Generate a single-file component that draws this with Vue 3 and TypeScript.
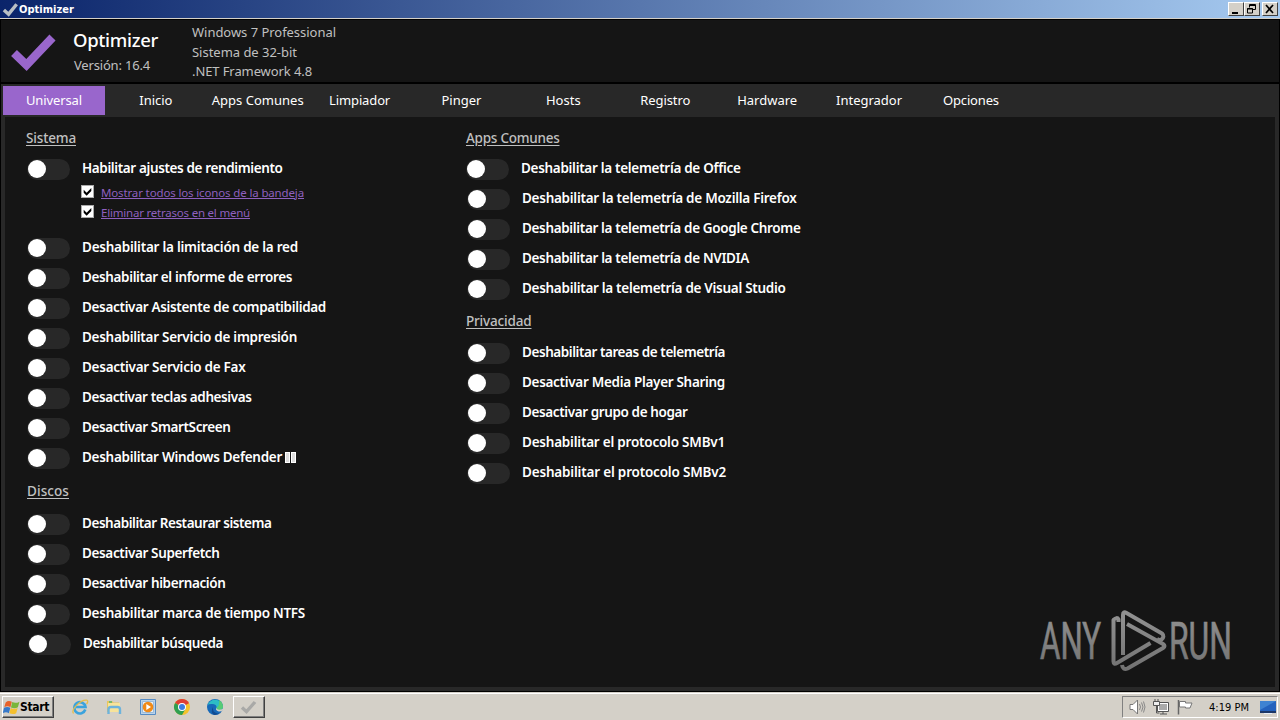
<script setup lang="ts">
import type { Directive } from 'vue'

interface Item { label: string; w: number; shift?: number; subs?: { label: string; w: number }[]; boxes?: boolean }
interface Group { title: string; w: number; kind: string; items: Item[] }

// Spreads the letters of a label so that it fills the given width.
const vFit: Directive<HTMLElement, number> = {
  mounted(el, { value }) {
    el.style.letterSpacing = '0px'
    const n = (el.textContent ?? '').length
    const w = el.getBoundingClientRect().width
    el.style.letterSpacing = `${(value - w) / n}px`
  },
}

const tabs = [
  { t: 'Universal', w: 56 }, { t: 'Inicio', w: 33 }, { t: 'Apps Comunes', w: 92 },
  { t: 'Limpiador', w: 61 }, { t: 'Pinger', w: 40 }, { t: 'Hosts', w: 35 },
  { t: 'Registro', w: 50 }, { t: 'Hardware', w: 60 }, { t: 'Integrador', w: 66 }, { t: 'Opciones', w: 56 },
]

const left: Group[] = [
  {
    title: 'Sistema', w: 50, kind: 'first', items: [
      {
        label: 'Habilitar ajustes de rendimiento', w: 200.5,
        subs: [{ label: 'Mostrar todos los iconos de la bandeja', w: 203 }, { label: 'Eliminar retrasos en el menú', w: 149 }],
      },
      { label: 'Deshabilitar la limitación de la red', w: 216 },
      { label: 'Deshabilitar el informe de errores', w: 210 },
      { label: 'Desactivar Asistente de compatibilidad', w: 244 },
      { label: 'Deshabilitar Servicio de impresión', w: 215 },
      { label: 'Desactivar Servicio de Fax', w: 163.5 },
      { label: 'Desactivar teclas adhesivas', w: 169.5 },
      { label: 'Desactivar SmartScreen', w: 148.5 },
      { label: 'Deshabilitar Windows Defender', w: 200, boxes: true },
    ],
  },
  {
    title: 'Discos', w: 42, kind: 'disks', items: [
      { label: 'Deshabilitar Restaurar sistema', w: 189.5 },
      { label: 'Desactivar Superfetch', w: 137.5 },
      { label: 'Desactivar hibernación', w: 143.5 },
      { label: 'Deshabilitar marca de tiempo NTFS', w: 223 },
      { label: 'Deshabilitar búsqueda', w: 140, shift: 1 },
    ],
  },
]

const right: Group[] = [
  {
    title: 'Apps Comunes', w: 93.5, kind: 'first', items: [
      { label: 'Deshabilitar la telemetría de Office', w: 219.5, shift: -1 },
      { label: 'Deshabilitar la telemetría de Mozilla Firefox', w: 274.5 },
      { label: 'Deshabilitar la telemetría de Google Chrome', w: 278.5 },
      { label: 'Deshabilitar la telemetría de NVIDIA', w: 227 },
      { label: 'Deshabilitar la telemetría de Visual Studio', w: 263.5 },
    ],
  },
  {
    title: 'Privacidad', w: 65.5, kind: 'privacy', items: [
      { label: 'Deshabilitar tareas de telemetría', w: 203 },
      { label: 'Desactivar Media Player Sharing', w: 203 },
      { label: 'Desactivar grupo de hogar', w: 165.5 },
      { label: 'Deshabilitar el protocolo SMBv1', w: 203 },
      { label: 'Deshabilitar el protocolo SMBv2', w: 204 },
    ],
  },
]
const columns = [left, right]
</script>

<template>
  <div class="screen">
    <div class="titlebar">
      <svg class="tick-small" viewBox="0 0 18 16"><path d="M2 9l5 4.500L15.500 3" fill="none" stroke="#b9c0c4" stroke-width="3.600" /></svg>
      <span class="wtitle"><span v-fit="55">Optimizer</span></span>
      <div class="wbtns">
        <i class="wbtn"><svg viewBox="0 0 16 14"><path d="M4 10h6v2H4z" /></svg></i>
        <i class="wbtn"><svg viewBox="0 0 16 14"><path d="M5.500 5.500V2.500h6v5h-3M5 3.500h7" class="ln" /><path d="M3.500 6.500h5v4.500h-5zM3 7h6" class="ln" /></svg></i>
        <i class="wbtn last"><svg viewBox="0 0 16 14"><path d="M4 3l7 8M11 3l-7 8" class="ln x" /></svg></i>
      </div>
    </div>

    <div class="window">
      <header class="head">
        <svg class="tick" viewBox="0 0 46 38"><path d="M4 20L16.500 32 42.500 4.500" fill="none" stroke="#9966cc" stroke-width="8.400" /></svg>
        <div class="brand">
          <div class="name"><span v-fit="85">Optimizer</span></div>
          <div class="ver"><span v-fit="76">Versión: 16.4</span></div>
        </div>
        <div class="info">
          <div><span v-fit="144">Windows 7 Professional</span></div>
          <div><span v-fit="105">Sistema de 32-bit</span></div>
          <div><span v-fit="120">.NET Framework 4.8</span></div>
        </div>
      </header>
      <nav class="tabs">
        <div v-for="(tab, i) in tabs" :key="tab.t" class="tab" :class="{ on: i === 0 }"><span v-fit="tab.w">{{ tab.t }}</span></div>
      </nav>
      <main class="body">
        <section v-for="(col, c) in columns" :key="c" class="col" :class="'col' + c">
          <div v-for="g in col" :key="g.title">
            <h2 :class="g.kind"><span v-fit="g.w">{{ g.title }}</span></h2>
            <template v-for="it in g.items" :key="it.label">
              <div class="row" :class="{ plus: it.shift === 1, minus: it.shift === -1 }">
                <div class="switch"><i /></div>
                <span v-fit="it.w" class="label">{{ it.label }}</span>
                <span v-if="it.boxes" class="boxes"><i /><i /></span>
              </div>
              <div v-if="it.subs" class="subs">
                <div v-for="s in it.subs" :key="s.label" class="sub">
                  <svg class="check" viewBox="0 0 13 13"><path d="M2 4.500v3.500l3.500 3.500L11 6V2.500L5.500 8z" /></svg>
                  <span v-fit="s.w">{{ s.label }}</span>
                </div>
              </div>
            </template>
          </div>
        </section>
        <svg class="mark" viewBox="0 0 200 70">
          <defs>
            <linearGradient id="mk" gradientUnits="userSpaceOnUse" x1="0" y1="5" x2="0" y2="66">
              <stop offset="0" stop-color="#929292" /><stop offset="1" stop-color="#707070" />
            </linearGradient>
          </defs>
          <g fill="url(#mk)" stroke="url(#mk)" stroke-width="0.700" class="mark-text">
            <text x="2" y="52" textLength="61" lengthAdjust="spacingAndGlyphs">ANY</text>
            <text x="131" y="52" textLength="63" lengthAdjust="spacingAndGlyphs">RUN</text>
          </g>
          <g fill="none" stroke="url(#mk)" stroke-width="4" stroke-linejoin="round">
            <path d="M80.500 15V12.500Q79 9.500 75.500 13V54.500Q75.500 58 79 56L112.500 36" />
            <path d="M85 48V8Q85 4 88.500 6L124 26.500Q127 29.500 123.500 32.500 121.500 33.500 119 32" />
            <path d="M89 17L125 37Q128 39 125 41L89.500 61.500Q85 63.500 84 58" />
          </g>
        </svg>
      </main>
    </div>

    <footer class="taskbar">
      <div class="start">
        <svg viewBox="0 0 16 16" class="flag">
          <path d="M2.500 3.200Q5 .8 8.300 2.600L7 7.800Q4.500 6 1.200 7.700z" fill="#e8622a" />
          <path d="M8.700 2.900Q12 4.500 15.500 2.500L14 7.800Q11 9.400 7.500 7.900z" fill="#79b63a" />
          <path d="M1 8.200Q4 6.700 6.900 8.200L5.500 13.300Q3 11.700 -.3 13.300z" fill="#3779c9" />
          <path d="M7.300 8.400Q10.500 10 13.800 8.400L12.400 13.400Q9.500 15 6 13.500z" fill="#f5c02e" />
        </svg>
        <span v-fit="29">Start</span>
      </div>
      <div class="quick">
        <svg viewBox="0 0 18 18">
          <path d="M14.300 11.500A5.600 5.600 0 1 1 14.500 9H5" fill="none" stroke="#3ba3dd" stroke-width="2.600" />
          <path d="M2.500 15.500C-1 12 10 1 16 2.200 17.500 3 16.500 5 15.500 6" fill="none" stroke="#e5bd4a" stroke-width="1.300" />
        </svg>
        <svg viewBox="0 0 18 18">
          <path d="M2 3h5l1.500 1.500H14V14H2z" fill="#e9c65d" /><path d="M3 5h12v9H3z" fill="#f7e39a" />
          <path d="M4 3h3v2H4z" fill="#79b86b" />
          <path d="M3.500 16v-4.500Q3.500 9 6 9h6.500Q15 9 15 11.500V16" fill="none" stroke="#6db3dc" stroke-width="2.400" />
        </svg>
        <svg viewBox="0 0 18 18">
          <path d="M1.500 1.500h15v15h-15z" fill="#b9d3ea" stroke="#558bc4" /><path d="M3.500 3.500h11v11h-11z" fill="#e6eef5" stroke="#9bbad8" />
          <circle cx="9" cy="9" r="5.300" fill="#f08a18" /><path d="M7.300 6v6l4.700-3z" fill="#fff" />
        </svg>
        <svg viewBox="0 0 18 18" class="chrome">
          <circle cx="9" cy="9" r="8" fill="#f4c22b" />
          <path d="M9 9L2.070 5A8 8 0 0 1 15.930 5z" fill="#df3e33" /><path d="M9 9L2.070 5A8 8 0 0 0 9 17L12.500 11z" fill="#2f9f51" />
          <path d="M9 5h6.900L9 9z" fill="#df3e33" />
          <circle cx="9" cy="9" r="4" fill="#fff" /><circle cx="9" cy="9" r="3" fill="#3d7de0" />
        </svg>
        <svg viewBox="0 0 18 18" class="edge">
          <circle cx="9" cy="9" r="8" fill="#1769b8" />
          <path d="M1.500 7A8 8 0 0 1 17 9Q16.500 12 13 12 10 12 10.500 10 11 6.500 7 6 3 5.500 1.500 7z" fill="#2dbdc5" />
          <path d="M13 2A8 8 0 0 1 17 9Q16.500 12 13 12 10 12 10.500 10 14 7 13 2z" fill="#57cb75" />
          <path d="M10.500 9.500Q9 12 12 13.300 14.500 14 16.500 12.500L18 9.800Q16 12 13.200 11.800 10.200 11.600 10.500 9.500z" fill="#d4d0c8" />
          <path d="M7 9Q6 14 11.500 15.500 14 16 15.500 14 12 17.500 8 17 4 14 7 9z" fill="#124b91" />
        </svg>
      </div>
      <div class="task"><svg viewBox="0 0 18 16"><path d="M2 8.500l4.500 4.200L15 3" fill="none" stroke="#a9a9a7" stroke-width="3.300" /></svg></div>
      <div class="tray">
        <svg viewBox="0 0 18 18" class="tv">
          <path d="M2 6.500h3L9.500 2v14L5 11.500H2z" fill="#fff" stroke="#777" />
          <path d="M11.500 6q2 3 0 6M13.500 4.500q3 4.500 0 9M15.500 3.500q3 5.500 0 11" fill="none" stroke="#888" />
        </svg>
        <svg viewBox="0 0 18 18" class="tn">
          <path d="M5.500 4.500h11v9h-11z" fill="#fff" stroke="#555" /><path d="M7 6h8v6H7z" fill="#aaa" />
          <path d="M8 16h7M11 13v3" stroke="#555" fill="none" />
          <path d="M1.500 3.500h6v4h-6z" fill="#eee" stroke="#555" /><path d="M3 1v3M6 1v3M4.500 7v8h3" stroke="#555" fill="none" />
        </svg>
        <svg viewBox="0 0 18 18" class="tf">
          <path d="M2.500 2v14.500" stroke="#666" stroke-width="1.500" /><path d="M3.500 3.500h6v1.500h6.500l-2 5H9.500V9h-6z" fill="#fff" stroke="#777" />
        </svg>
        <span class="clock"><span v-fit="40">4:19 PM</span></span>
        <svg viewBox="0 0 16 15" class="td">
          <path d="M0 1h16v10H0z" fill="#2462bd" /><path d="M0 1h16L0 10z" fill="#3f83d2" />
          <path d="M0 11h16v2H0z" fill="#1c3768" /><path d="M4 13h8v1H4z" fill="#e7eef7" />
        </svg>
      </div>
    </footer>
  </div>
</template>

<style>
body { margin: 0; background: #000; }
</style>

<style scoped>
* { box-sizing: border-box; }
.screen { width: 1280px; height: 720px; overflow: hidden; display: flex; flex-direction: column; background: #000; font-family: "Noto Sans", "Open Sans", sans-serif; white-space: nowrap; }
.screen svg { display: block; flex: none; }
.titlebar { height: 19px; flex: none; display: flex; align-items: center; border-bottom: 1px solid #d4d0c8; background: linear-gradient(90deg, #0a246a, #a6caf0); padding: 0 2px; }
.tick-small { width: 17px; height: 16px; }
.wtitle { font: bold 11px/16px "DejaVu Sans Condensed", "DejaVu Sans", sans-serif; color: #fff; flex: 1; padding-top: 1px; }
.wbtns { display: flex; }
.wbtn { width: 16px; height: 14px; background: #d4d0c8; border: 1px solid; border-color: #fff #404040 #404040 #fff; }
.wbtn svg { width: 16px; height: 14px; margin: -1px; }
.wbtn.last { margin-left: 2px; }
.ln { fill: none; stroke: #000; stroke-width: 1; }
.x { stroke-width: 1.700; }

.window { height: 673px; flex: none; display: flex; flex-direction: column; border: 1px solid #000; }
.head { height: 64px; flex: none; background: #151515; border-bottom: 2px solid #000; display: flex; }
.tick { width: 46px; height: 38px; margin: 13px 0 0 9px; }
.brand { width: 119px; margin-left: 17px; }
.name { font-size: 18.500px; line-height: 24px; margin-top: 8px; color: #fff; font-weight: 500; }
.ver { font-size: 13px; line-height: 18px; margin-top: 4px; padding-left: 1px; color: #c0c0c0; }
.info { font-size: 13px; line-height: 19.500px; padding-top: 3px; color: #c0c0c0; }
.tabs { height: 33px; flex: none; background: #282828; display: flex; padding: 2px 0 2px 2px; }
.tab { width: 101.900px; text-align: center; color: #fff; font-size: 13px; line-height: 29px; }
.tab.on { background: #9966cc; }
.body { flex: 1; position: relative; background: #151515; border: solid #282828; border-width: 0 4px 4px 4px; display: flex; }
.col { width: 439px; padding-left: 21px; }
h2 { margin: 0; height: 36px; padding-top: 6px; line-height: 30px; font-size: 13.500px; font-weight: 500; color: #c0c0c0; }
h2 span { text-decoration: underline; text-underline-offset: 2px; }
h2.disks { padding-top: 4px; padding-left: 1px; }
h2.privacy { height: 34px; padding-top: 3px; }
.col1 h2 { padding-left: 1px; }
.row { height: 30px; display: flex; align-items: center; padding-left: 1px; }
.row.plus { padding-left: 2px; }
.row.minus { padding-left: 0; }
.col1 .row { padding-left: 2px; }
.col1 .row.minus { padding-left: 1px; }
.switch { width: 43px; height: 21px; border-radius: 11px; background: #282828; margin: 2px 12px 0 0; padding: 1.500px 1px; }
.switch i { display: block; width: 18px; height: 18px; border-radius: 50%; background: #fff; }
.label { color: #fff; font-size: 13.500px; font-weight: 600; line-height: 30px; }
.boxes { display: flex; gap: 1px; margin-left: 3px; }
.boxes i { width: 5px; height: 11px; background: #ddd; border: 1px solid #fff; }
.subs { padding: 0 0 9px 55px; }
.sub { height: 20px; display: flex; align-items: center; gap: 7px; font-size: 11.500px; line-height: 20px; color: #8f60bf; }
.sub span { text-decoration: underline; }
.check { width: 13px; height: 13px; background: #fff; border: 1px solid #aaa; margin-top: -3px; }
.mark { position: absolute; right: 37px; bottom: 10px; width: 200px; height: 70px; }
.screen .mark { overflow: visible; }
.mark-text { font: 400 51px/60px Roboto, sans-serif; }

.taskbar { height: 28px; flex: none; background: #d4d0c8; box-shadow: inset 0 1px #d4d0c8, inset 0 2px #fff; display: flex; align-items: center; padding: 3px 2px 1px; }
.start { width: 52px; height: 22px; border: 1px solid; border-color: #fff #404040 #404040 #fff; box-shadow: inset -1px -1px #808080; display: flex; align-items: center; font: bold 12px "DejaVu Sans Condensed", "DejaVu Sans", sans-serif; color: #000; }
.flag { width: 17px; height: 17px; }
.quick { display: flex; gap: 16px; margin-left: 17px; }
.quick svg { width: 18px; height: 18px; }
.quick .chrome, .quick .edge { margin-left: -0.500px; }
.task { width: 32px; height: 22px; margin-left: 9px; border: 1px solid; border-color: #fff #404040 #404040 #fff; box-shadow: inset -1px -1px #808080; padding: 2px 6px; }
.task svg { width: 18px; height: 16px; }
.tray { margin-left: auto; width: 156px; height: 22px; border: 1px solid; border-color: #808080 #fff #fff #808080; display: flex; align-items: center; padding-left: 5px; }
.tv, .tn, .tf { width: 18px; height: 18px; margin-right: 6px; }
.clock { width: 51px; margin-left: 9px; font: 11px "DejaVu Sans Condensed", "DejaVu Sans", sans-serif; color: #000; }
.td { width: 16px; height: 15px; }
</style>
